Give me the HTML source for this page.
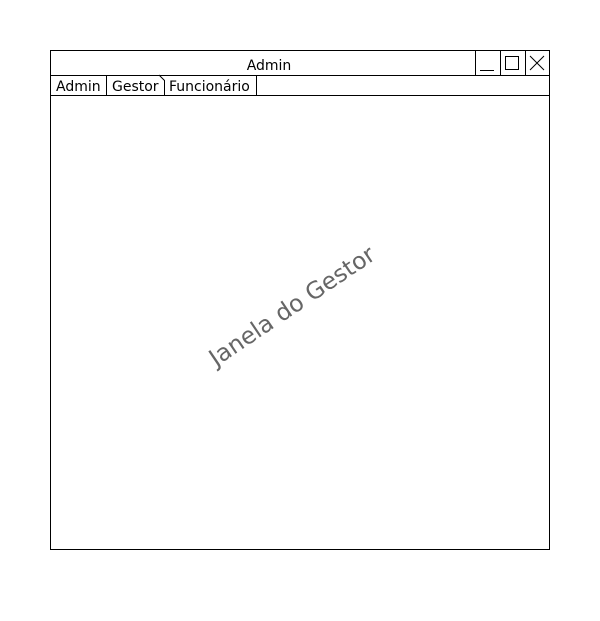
<!DOCTYPE html>
<html><head><style>body{margin:0;background:#fff}svg{display:block}</style></head><body>
<svg width="600" height="621" xmlns="http://www.w3.org/2000/svg" font-family="DejaVu Sans, sans-serif">
<rect x="50.5" y="50.5" width="499" height="499" fill="#fff" stroke="#000"/>
<line x1="50" y1="75.5" x2="550" y2="75.5" stroke="#000"/>
<line x1="50" y1="95.5" x2="550" y2="95.5" stroke="#000"/>
<text x="269" y="70" font-size="14" text-anchor="middle">Admin</text>
<line x1="475.5" y1="50" x2="475.5" y2="75" stroke="#000"/>
<line x1="500.5" y1="50" x2="500.5" y2="75" stroke="#000"/>
<line x1="525.5" y1="50" x2="525.5" y2="75" stroke="#000"/>
<line x1="480" y1="70.5" x2="494" y2="70.5" stroke="#000"/>
<rect x="505.5" y="56.5" width="13" height="13" fill="none" stroke="#000"/>
<path d="M530 56 L544 70 M544 56 L530 70" stroke="#000"/>
<line x1="106.5" y1="75" x2="106.5" y2="95" stroke="#000"/>
<path d="M159 75 L164.5 80.5 L164.5 95" fill="none" stroke="#000"/>
<line x1="256.5" y1="75" x2="256.5" y2="95" stroke="#000"/>
<text x="56" y="91" font-size="14">Admin</text>
<text x="112" y="91" font-size="14">Gestor</text>
<text x="169" y="91" font-size="14">Funcionário</text>
<text x="292" y="314" font-size="23.5" fill="#666" text-anchor="middle" transform="rotate(-34 292 306)">Janela do Gestor</text>
</svg>
</body></html>
